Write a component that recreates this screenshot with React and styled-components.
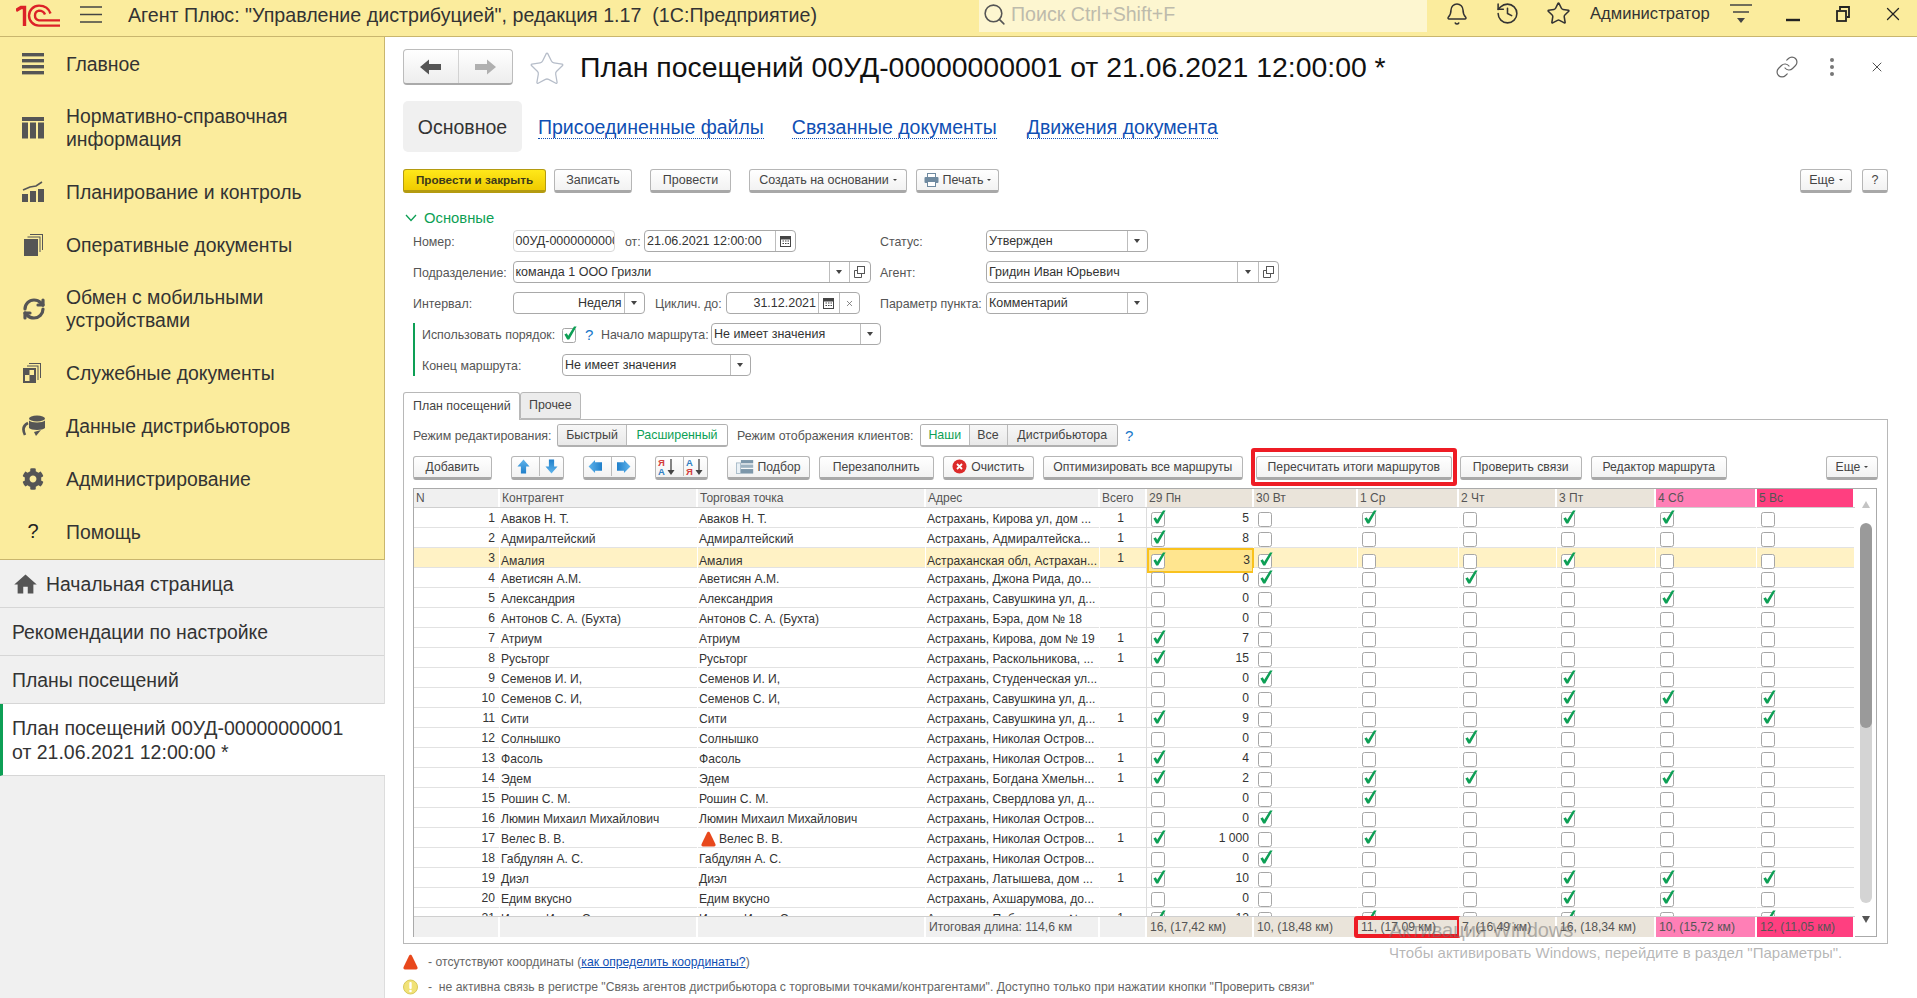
import React from 'react';
import styled, { createGlobalStyle } from 'styled-components';
import { Bell, History, Star, Search, X, Link as LinkIcon, RefreshCw } from 'lucide-react';
import { FaCog } from 'react-icons/fa';
import { MdHome } from 'react-icons/md';

const rows = [
    ['Аваков Н. Т.', 'Аваков Н. Т.', 'Астрахань, Кирова ул, дом ...', '1', '5', '1010110'],
    ['Адмиралтейский', 'Адмиралтейский', 'Астрахань, Адмиралтейска...', '1', '8', '1000000'],
    ['Амалия', 'Амалия', 'Астраханская обл, Астрахан...', '1', '3', '1100100'],
    ['Аветисян А.М.', 'Аветисян А.М.', 'Астрахань, Джона Рида, до...', '', '0', '0101000'],
    ['Александрия', 'Александрия', 'Астрахань, Савушкина ул, д...', '', '0', '0000011'],
    ['Антонов С. А. (Бухта)', 'Антонов С. А. (Бухта)', 'Астрахань, Бэра, дом № 18', '', '0', '0000000'],
    ['Атриум', 'Атриум', 'Астрахань, Кирова, дом № 19', '1', '7', '1000000'],
    ['Русьторг', 'Русьторг', 'Астрахань, Раскольникова, ...', '1', '15', '1000000'],
    ['Семенов И. И,', 'Семенов И. И,', 'Астрахань, Студенческая ул...', '', '0', '0100100'],
    ['Семенов С. И,', 'Семенов С. И,', 'Астрахань, Савушкина ул, д...', '', '0', '0000111'],
    ['Сити', 'Сити', 'Астрахань, Савушкина ул, д...', '1', '9', '1000101'],
    ['Солнышко', 'Солнышко', 'Астрахань, Николая Остров...', '', '0', '0011000'],
    ['Фасоль', 'Фасоль', 'Астрахань, Николая Остров...', '1', '4', '1000000'],
    ['Эдем', 'Эдем', 'Астрахань, Богдана Хмельн...', '1', '2', '1011010'],
    ['Рошин С. М.', 'Рошин С. М.', 'Астрахань, Свердлова ул, д...', '', '0', '0010000'],
    ['Люмин Михаил Михайлович', 'Люмин Михаил Михайлович', 'Астрахань, Николая Остров...', '', '0', '0100100'],
    ['Велес В. В.', 'Велес В. В.', 'Астрахань, Николая Остров...', '1', '1 000', '1010000'],
    ['Габдулян А. С.', 'Габдулян А. С.', 'Астрахань, Николая Остров...', '', '0', '0100000'],
    ['Диэл', 'Диэл', 'Астрахань, Латышева, дом ...', '1', '10', '1000111'],
    ['Едим вкусно', 'Едим вкусно', 'Астрахань, Ахшарумова, до...', '', '0', '0000110'],
    ['Иванов Игорь Сергеевич', 'Иванов Игорь Сергеевич', 'Астрахань, Победы, дом № ...', '1', '12', '1010101']
];

const days = [
    ['29 Пн', '16, (17,42 км)', 'work'],
    ['30 Вт', '10, (18,48 км)', 'work'],
    ['1 Ср', '11, (17,09 км)', 'work'],
    ['2 Чт', '7, (16,49 км)', 'work'],
    ['3 Пт', '16, (18,34 км)', 'work'],
    ['4 Сб', '10, (15,72 км)', 'sat'],
    ['5 Вс', '12, (11,05 км)', 'sun']
];

const Check = ({ on }) => (
    <CheckSvg width="16" height="17" viewBox="0 0 16 17">
        <rect x="0.5" y="2.5" width="13" height="14" rx="2" fill="#fff" stroke="#a6a6a6" />
        {on && <path d="M2.4 8.4 L4.8 7.2 L6.2 9.8 L12 0.6 L14.6 0.4 L7.2 13.6 L5.2 13.6 Z" fill="#0d9f55" />}
    </CheckSvg>
);

const Triangle = () => (
    <svg width="15" height="16" viewBox="0 0 15 16">
        <path d="M7.5 0.8 C8.3 0.8 8.8 1.4 9.2 2.2 L14.4 13 C15 14.4 14.2 15.4 13 15.4 H2 C0.8 15.4 0 14.4 0.6 13 L5.8 2.2 C6.2 1.4 6.7 0.8 7.5 0.8 Z" fill="#e8481c" />
    </svg>
);

const Logo = () => (
    <svg width="44" height="24" viewBox="0 0 44 24" fill="none" stroke="#dc2128" strokeWidth="2.4">
        <path d="M0 6.5 L5 3.5 H8.5 V22" strokeWidth="3.4" />
        <path d="M44 21.6 H23 A10 10 0 0 1 23 1.6 C29 1.6 33 5 34.5 9.5" />
        <path d="M44 16.4 H23 A5 5 0 0 1 23 6.6 C26 6.6 28 8 29 10.5" />
    </svg>
);

const Burger = () => (
    <svg width="22" height="18" viewBox="0 0 22 18" stroke="#444" strokeWidth="1.5">
        <path d="M0 1 H22 M0 8.5 H22 M0 16 H22" />
    </svg>
);

const MainIcon = () => (
    <svg width="22" height="22" viewBox="0 0 22 22" fill="#555">
        <rect y="0" width="22" height="3.4" /><rect y="6" width="22" height="3.4" />
        <rect y="12" width="22" height="3.4" /><rect y="18" width="22" height="3.4" />
    </svg>
);

const TableIcon = () => (
    <svg width="22" height="22" viewBox="0 0 22 22" fill="#555">
        <rect y="0" width="22" height="4" />
        <rect y="5.5" width="6" height="16" /><rect x="8" y="5.5" width="6" height="16" /><rect x="16" y="5.5" width="6" height="16" />
    </svg>
);

const ChartIcon = () => (
    <svg width="22" height="22" viewBox="0 0 22 22" fill="#555">
        <rect y="13" width="6" height="8" /><rect x="8" y="10" width="6" height="11" /><rect x="16" y="8" width="6" height="13" />
        <path d="M1 9 L8 6 L14 5 L20 1" fill="none" stroke="#555" strokeWidth="1.6" />
    </svg>
);

const DocsIcon = () => (
    <svg width="22" height="22" viewBox="0 0 22 22" fill="#555">
        <path d="M8 0 H21 V16 H20 V1 H8 Z" /><path d="M5.5 2.5 H18.5 V18 H17.5 V3.5 H5.5 Z" />
        <rect x="2" y="5" width="14" height="17" />
    </svg>
);

const ServiceIcon = () => (
    <svg width="20" height="20" viewBox="0 0 20 20" fill="#555">
        <path d="M7 0 H19 V15 H18 V1 H7 Z" /><path d="M5 2.5 H16.5 V17 H15.5 V3.5 H5 Z" />
        <rect x="1" y="5" width="13" height="15" />
        <rect x="7.5" y="7" width="4.5" height="5" fill="#fbec9d" /><rect x="3" y="12" width="4.5" height="6" fill="#fbec9d" />
    </svg>
);

const DataIcon = () => (
    <svg width="24" height="22" viewBox="0 0 24 22" fill="#555">
        <ellipse cx="15" cy="3.5" rx="8" ry="3" /><path d="M7 5.5 C9 8 21 8 23 5.5 V13 C21 15.5 9 15.5 7 13 Z" />
        <path d="M6 8 C2 10 0 14 3 20" fill="none" stroke="#555" strokeWidth="2.6" />
        <path d="M12 17 L19 15 L14 21 Z" />
    </svg>
);

const ArrowBack = ({ color, flip }) => (
    <svg width="22" height="16" viewBox="0 0 22 16" style={flip ? { transform: 'scaleX(-1)' } : undefined}>
        <path d="M0 8 L9 0.5 V5 H21 V11 H9 V15.5 Z" fill={color} />
    </svg>
);

const BlueArrow = ({ rotate, fat }) => (
    <svg width="13" height="15" viewBox="0 0 14 16" style={{ transform: `rotate(${rotate}deg)` }}>
        <defs>
            <linearGradient id="blueFill" x1="0" y1="0" x2="0" y2="1">
                <stop offset="0" stopColor="#5fb4ec" /><stop offset="1" stopColor="#1f7fca" />
            </linearGradient>
        </defs>
        <path d={fat ? 'M7 0.5 L14 7.5 L11.5 7.5 V15 H2.5 V7.5 L0 7.5 Z' : 'M7 0.5 L13.5 8 H9.8 V15.5 H4.2 V8 H0.5 Z'} fill="url(#blueFill)" />
    </svg>
);

const SortIcon = ({ top, bottom, topColor, bottomColor }) => (
    <svg width="20" height="20" viewBox="0 0 20 20">
        <text x="1" y="8.5" fontSize="9.5" fontWeight="700" fontFamily="Liberation Sans" fill={topColor}>{top}</text>
        <text x="1" y="18" fontSize="9.5" fontWeight="700" fontFamily="Liberation Sans" fill={bottomColor}>{bottom}</text>
        <path d="M14 2 V15" stroke="#444" strokeWidth="1.3" />
        <path d="M10.5 13 H17.5 L14 18 Z" fill="#444" />
    </svg>
);

const PickIcon = () => (
    <svg width="18" height="18" viewBox="0 0 22 18">
        <rect x="0.5" y="4" width="5" height="13" fill="#eaf1f6" stroke="#9fb4c2" />
        <rect x="6" y="0.5" width="15" height="4" fill="#7d97aa" /><rect x="6" y="6" width="15" height="4" fill="#9db2c1" /><rect x="6" y="11.5" width="15" height="5.5" fill="#7d97aa" />
    </svg>
);

const ClearIcon = () => (
    <svg width="15" height="15" viewBox="0 0 15 15">
        <circle cx="7.5" cy="7.5" r="7" fill="#dc2a2a" />
        <path d="M5 5 L10 10 M10 5 L5 10" stroke="#fff" strokeWidth="1.8" />
    </svg>
);

const PrintIcon = () => (
    <svg width="15" height="14" viewBox="0 0 15 14">
        <rect x="3.5" y="0.5" width="8" height="4" fill="#fff" stroke="#6f8aa0" />
        <rect x="0.5" y="4" width="14" height="6" rx="1" fill="#6f8aa0" />
        <rect x="3.5" y="8.5" width="8" height="5" fill="#fff" stroke="#6f8aa0" />
    </svg>
);

const CalendarIcon = () => (
    <svg width="11" height="12" viewBox="0 0 11 12">
        <rect x="0.5" y="1.5" width="10" height="10" fill="#fff" stroke="#444" />
        <rect x="0.5" y="1.5" width="10" height="3" fill="#444" />
        <path d="M2.5 6 H4 M5 6 H6.5 M7.5 6 H9 M2.5 8.5 H4 M5 8.5 H6.5 M7.5 8.5 H9" stroke="#444" />
    </svg>
);

const OpenIcon = () => (
    <svg width="11" height="12" viewBox="0 0 11 12" fill="none" stroke="#555">
        <rect x="3.5" y="0.5" width="7" height="7" fill="#fff" />
        <path d="M3 4.5 H0.5 V11.5 H7.5 V8" />
    </svg>
);

const Hint = () => (
    <svg width="15" height="16" viewBox="0 0 15 16">
        <circle cx="7.5" cy="8" r="7" fill="#f1e277" stroke="#d8c95a" />
        <rect x="6.3" y="3" width="2.4" height="7" rx="1" fill="#fff" />
        <circle cx="7.5" cy="12" r="1.3" fill="#fff" />
    </svg>
);

function renderNav() {

    const navItems = [
        [<MainIcon />, 'Главное'],
        [<TableIcon />, 'Нормативно-справочная\nинформация'],
        [<ChartIcon />, 'Планирование и контроль'],
        [<DocsIcon />, 'Оперативные документы'],
        [<RefreshCw size={24} strokeWidth={3.2} color="#555" />, 'Обмен с мобильными\nустройствами'],
        [<ServiceIcon />, 'Служебные документы'],
        [<DataIcon />, 'Данные дистрибьюторов'],
        [<FaCog size={22} color="#555" />, 'Администрирование'],
        [<HelpMark>?</HelpMark>, 'Помощь']
    ];

    return navItems.map(([icon, label]) => (
        <NavItem key={label} $tall={label.includes('\n')}>
            <NavIcon>{icon}</NavIcon>
            <NavLabel>{label}</NavLabel>
        </NavItem>
    ));
}

function renderRow(row, index) {

    const [name, point, address, total, count, marks] = row;
    const selected = index === 2;

    return (
        <Row key={index} $selected={selected}>
            <NumberCell>{index + 1}</NumberCell>
            <TextCell>{name}</TextCell>
            <TextCell>
                {index === 16 && <RowWarning><Triangle /></RowWarning>}
                {point}
            </TextCell>
            <TextCell>{address}</TextCell>
            <TotalCell>{total}</TotalCell>
            <FirstDayCell $selected={selected}>
                <Check on={marks[0] === '1'} />
                <span>{count}</span>
            </FirstDayCell>
            {marks.slice(1).split('').map((mark, day) => (
                <DayCell key={day}><Check on={mark === '1'} /></DayCell>
            ))}
        </Row>
    );
}

export default function App() {

    return (
        <Page>
            <GlobalStyle />

            <TopBar>
                <TopLeft>
                    <LogoBox><Logo /></LogoBox>
                    <BurgerBox><Burger /></BurgerBox>
                    <AppTitle>Агент Плюс: "Управление дистрибуцией", редакция 1.17  (1С:Предприятие)</AppTitle>
                </TopLeft>
                <SearchBox>
                    <Search size={25} strokeWidth={1.5} color="#555" />
                    <SearchText>Поиск Ctrl+Shift+F</SearchText>
                </SearchBox>
                <TopRight>
                    <BarIcon><Bell size={24} strokeWidth={1.5} color="#333" /></BarIcon>
                    <BarIcon><History size={25} strokeWidth={1.5} color="#333" /></BarIcon>
                    <BarIcon><Star size={25} strokeWidth={1.5} color="#333" /></BarIcon>
                    <UserName>Администратор</UserName>
                    <UserMenu>
                        <svg width="24" height="24" viewBox="0 0 24 24">
                            <path d="M1 3 H23 M4 10 H20" stroke="#444" strokeWidth="1.5" />
                            <path d="M8 16 H16 L12 21 Z" fill="#444" />
                        </svg>
                    </UserMenu>
                    <WindowButton $first>
                        <svg width="16" height="16" viewBox="0 0 16 16"><path d="M1 14 H15" stroke="#222" strokeWidth="2.4" /></svg>
                    </WindowButton>
                    <WindowButton>
                        <svg width="16" height="18" viewBox="0 0 16 18" fill="none" stroke="#222" strokeWidth="1.8">
                            <rect x="2" y="6" width="9" height="10" /><path d="M5 5 V2 H14 V12 H12" />
                        </svg>
                    </WindowButton>
                    <CloseWindow><X size={22} strokeWidth={1.4} color="#222" /></CloseWindow>
                </TopRight>
            </TopBar>

            <Body>
                <Sidebar>
                    <Nav>{renderNav()}</Nav>
                    <OpenItem><MdHome size={27} color="#555" /><span>Начальная страница</span></OpenItem>
                    <OpenItem>Рекомендации по настройке</OpenItem>
                    <OpenItem>Планы посещений</OpenItem>
                    <ActiveItem>План посещений 00УД-00000000001<br />от 21.06.2021 12:00:00 *</ActiveItem>
                </Sidebar>

                <Main>
                    <Header>
                        <NavGroup>
                            <NavArrow><ArrowBack color="#555" /></NavArrow>
                            <NavArrow><ArrowBack color="#b0b0b0" flip /></NavArrow>
                        </NavGroup>
                        <FavStar><Star size={38} strokeWidth={0.8} color="#b6bdc9" /></FavStar>
                        <Title>План посещений 00УД-00000000001 от 21.06.2021 12:00:00 *</Title>
                        <HeaderTools>
                            <LinkIcon size={24} strokeWidth={1.2} color="#666" />
                            <Dots><i /><i /><i /></Dots>
                            <X size={16} strokeWidth={1.4} color="#444" />
                        </HeaderTools>
                    </Header>

                    <PageTabs>
                        <PageTabActive>Основное</PageTabActive>
                        <PageLink $ml={16}>Присоединенные файлы</PageLink>
                        <PageLink $ml={28}>Связанные документы</PageLink>
                        <PageLink $ml={30}>Движения документа</PageLink>
                    </PageTabs>

                    <CommandBar>
                        <PrimaryButton $w={143}>Провести и закрыть</PrimaryButton>
                        <Button $w={78} $ml={8}>Записать</Button>
                        <Button $w={81} $ml={18}>Провести</Button>
                        <Button $w={158} $ml={18}>Создать на основании<Caret $small /></Button>
                        <Button $w={83} $ml={9}><PrintIcon />Печать<Caret $small /></Button>
                        <Button $w={52} $push>Еще<Caret $small /></Button>
                        <Button $w={26} $ml={10}>?</Button>
                    </CommandBar>

                    <GroupTitle>
                        <svg width="12" height="8" viewBox="0 0 12 8" fill="none" stroke="#0d9f55" strokeWidth="1.3"><path d="M1 1 L6 6.5 L11 1" /></svg>
                        Основные
                    </GroupTitle>

                    <Form>
                        <FormRow>
                            <Label $w={99.5}>Номер:</Label>
                            <Field $w={102} $plain><Value>00УД-00000000001</Value></Field>
                            <Label $w={19} $ml={10.5}>от:</Label>
                            <Field $w={152}><Value>21.06.2021 12:00:00</Value><Addon><CalendarIcon /></Addon></Field>
                            <Label $w={106} $ml={84}>Статус:</Label>
                            <Field $w={162}><Value>Утвержден</Value><Addon><Caret /></Addon></Field>
                        </FormRow>
                        <FormRow>
                            <Label $w={99.5}>Подразделение:</Label>
                            <Field $w={358}><Value>команда 1 ООО Гризли</Value><Addon><Caret /></Addon><Addon><OpenIcon /></Addon></Field>
                            <Label $w={106} $ml={9.5}>Агент:</Label>
                            <Field $w={293}><Value>Гридин Иван Юрьевич</Value><Addon><Caret /></Addon><Addon><OpenIcon /></Addon></Field>
                        </FormRow>
                        <FormRow>
                            <Label $w={99.5}>Интервал:</Label>
                            <Field $w={132.5}><Value $right>Неделя</Value><Addon><Caret /></Addon></Field>
                            <Label $w={71} $ml={10}>Циклич. до:</Label>
                            <Field $w={134}><Value $right>31.12.2021</Value><Addon><CalendarIcon /></Addon><Addon><X size={9} color="#666" /></Addon></Field>
                            <Label $w={106} $ml={20}>Параметр пункта:</Label>
                            <Field $w={162}><Value>Комментарий</Value><Addon><Caret /></Addon></Field>
                        </FormRow>
                        <OrderGroup>
                            <FormRow>
                                <Label $w={140}>Использовать порядок:</Label>
                                <OrderCheck><Check on /></OrderCheck>
                                <Question $w={16}>?</Question>
                                <Label $w={110}>Начало маршрута:</Label>
                                <Field $w={170}><Value>Не имеет значения</Value><Addon><Caret /></Addon></Field>
                            </FormRow>
                            <FormRow>
                                <Label $w={140}>Конец маршрута:</Label>
                                <Field $w={189}><Value>Не имеет значения</Value><Addon><Caret /></Addon></Field>
                            </FormRow>
                        </OrderGroup>
                    </Form>

                    <TabStrip>
                        <PanelTab $active $w={117}>План посещений</PanelTab>
                        <PanelTab $w={61}>Прочее</PanelTab>
                    </TabStrip>

                    <Panel>
                        <ModeRow>
                            <Label $w={144}>Режим редактирования:</Label>
                            <Segments>
                                <Segment $w={68}>Быстрый</Segment>
                                <Segment $w={101} $on>Расширенный</Segment>
                            </Segments>
                            <Label $w={183} $ml={9}>Режим отображения клиентов:</Label>
                            <Segments>
                                <Segment $w={47.5} $on>Наши</Segment>
                                <Segment $w={38}>Все</Segment>
                                <Segment $w={110.5}>Дистрибьютора</Segment>
                            </Segments>
                            <Question $w={16} $ml={7}>?</Question>
                        </ModeRow>

                        <RowTools>
                            <Button $w={79}>Добавить</Button>
                            <Button $w={53.5} $ml={18.5}>
                                <SplitPart><BlueArrow rotate={0} /></SplitPart>
                                <SplitPart><BlueArrow rotate={180} /></SplitPart>
                            </Button>
                            <Button $w={53.5} $ml={18.5}>
                                <SplitPart><BlueArrow rotate={-90} fat /></SplitPart>
                                <SplitPart><BlueArrow rotate={90} fat /></SplitPart>
                            </Button>
                            <Button $w={53} $ml={18.5}>
                                <SplitPart><SortIcon top="Я" bottom="А" topColor="#d43c3c" bottomColor="#2f7fc4" /></SplitPart>
                                <SplitPart><SortIcon top="А" bottom="Я" topColor="#2f7fc4" bottomColor="#d43c3c" /></SplitPart>
                            </Button>
                            <Button $w={83} $ml={19}><PickIcon />Подбор</Button>
                            <Button $w={114.5} $ml={9.5}>Перезаполнить</Button>
                            <Button $w={90.5} $ml={9.5}><ClearIcon />Очистить</Button>
                            <Button $w={199.5} $ml={9.5}>Оптимизировать все маршруты</Button>
                            <MarkedFrame>
                                <Button $w={196.5}>Пересчитать итоги маршрутов</Button>
                            </MarkedFrame>
                            <Button $w={121.5} $ml={9}>Проверить связи</Button>
                            <Button $w={136.5} $ml={9}>Редактор маршрута</Button>
                            <Button $w={52} $push>Еще<Caret $small /></Button>
                        </RowTools>

                        <Table>
                            <TableMain>
                                <HeadRow>
                                    <HeadCell>N</HeadCell>
                                    <HeadCell>Контрагент</HeadCell>
                                    <HeadCell>Торговая точка</HeadCell>
                                    <HeadCell>Адрес</HeadCell>
                                    <HeadCell>Всего</HeadCell>
                                    {days.map(([label, , kind]) => <HeadCell key={label} $kind={kind}>{label}</HeadCell>)}
                                </HeadRow>
                                <TableBody>
                                    {rows.map(renderRow)}
                                </TableBody>
                                <FootRow>
                                    <FootCell />
                                    <FootCell />
                                    <FootCell />
                                    <FootCell>Итоговая длина: 114,6 км</FootCell>
                                    <FootCell />
                                    {days.map(([label, sum, kind]) => (
                                        <FootCell key={label} $kind={kind} $marked={label === '1 Ср'}>{sum}</FootCell>
                                    ))}
                                </FootRow>
                            </TableMain>
                            <ScrollBar>
                                <ScrollArrow $up />
                                <ScrollTrack><ScrollThumb /></ScrollTrack>
                                <ScrollArrow />
                            </ScrollBar>
                        </Table>
                    </Panel>

                    <Legend $first>
                        <LegendIcon><Triangle /></LegendIcon>
                        <span>- отсутствуют координаты (<LegendLink>как определить координаты?</LegendLink>)</span>
                    </Legend>
                    <Legend>
                        <LegendIcon><Hint /></LegendIcon>
                        <span>-  не активна связь в регистре "Связь агентов дистрибьютора с торговыми точками/контрагентами". Доступно только при нажатии кнопки "Проверить связи"</span>
                    </Legend>
                </Main>
            </Body>

            <Watermark>
                <WatermarkTitle>Активация Windows</WatermarkTitle>
                <WatermarkText>Чтобы активировать Windows, перейдите в раздел "Параметры".</WatermarkText>
            </Watermark>
        </Page>
    );
}

const GlobalStyle = createGlobalStyle`
    html, body {
        margin: 0;
        padding: 0;
        background: #fff;
        font-family: "Liberation Sans", Arial, sans-serif;
        overflow: hidden;
    }
    * {
        box-sizing: border-box;
    }
`;

const Page = styled.div`
    position: relative;
    width: 1917px;
    height: 998px;
    display: flex;
    flex-direction: column;
    overflow: hidden;
    color: #333;
`;

const TopBar = styled.header`
    display: grid;
    grid-template-columns: 979px 448px 1fr;
    height: 37px;
    flex: none;
    background: #fbec9d;
    border-bottom: 1px solid #c9b66e;
`;

const TopLeft = styled.div`
    display: flex;
    align-items: center;
    height: 30px;
`;

const LogoBox = styled.div`
    margin-left: 16px;
    display: flex;
    margin-top: 2px;
`;

const BurgerBox = styled.div`
    margin-left: 20px;
    display: flex;
`;

const AppTitle = styled.div`
    margin-left: 26px;
    font-size: 19.65px;
    color: #333;
    white-space: pre;
`;

const SearchBox = styled.div`
    height: 32px;
    padding: 0 0 3px 3px;
    background: #fdf6d0;
    display: flex;
    align-items: center;
`;

const SearchText = styled.span`
    margin-left: 4px;
    font-size: 19.6px;
    color: #bdbbac;
`;

const TopRight = styled.div`
    display: flex;
    align-items: center;
    height: 27px;
    padding-left: 4px;
`;

const BarIcon = styled.div`
    width: 51px;
    display: flex;
    justify-content: center;
`;

const UserName = styled.div`
    width: 120px;
    margin-left: 6px;
    font-size: 16.6px;
    white-space: nowrap;
`;

const UserMenu = styled.div`
    width: 36px;
    margin-left: 13px;
    display: flex;
    justify-content: center;
`;

const WindowButton = styled.div`
    width: 50px;
    display: flex;
    justify-content: center;
    margin-left: ${props => (props.$first ? 9 : 0)}px;
`;

const CloseWindow = styled.div`
    width: 49px;
    display: flex;
    justify-content: center;
`;

const Body = styled.div`
    flex: 1;
    display: flex;
    min-height: 0;
`;

const Sidebar = styled.aside`
    width: 385px;
    flex: none;
    background: #f0f0f0;
    border-right: 1px solid #ddd;
`;

const Nav = styled.nav`
    background: #fbec9d;
    height: 523px;
    border-bottom: 1px solid #c9b66e;
    margin-right: -1px;
    border-right: 1px solid #c9b66e;
`;

const NavItem = styled.div`
    height: ${props => (props.$tall ? 75 : 53)}px;
    display: flex;
    align-items: center;
    padding-left: 22px;
`;

const NavIcon = styled.div`
    width: 44px;
    display: flex;
    align-items: center;
`;

const HelpMark = styled.span`
    width: 22px;
    text-align: center;
    font-size: 20px;
    color: #222;
`;

const NavLabel = styled.div`
    margin-top: 1px;
    font-size: 19.4px;
    line-height: 23px;
    color: #333;
    white-space: pre-line;
`;

const OpenItem = styled.div`
    height: 48px;
    display: flex;
    align-items: center;
    gap: 7px;
    padding: 1px 0 0 12px;
    font-size: 19.4px;
    color: #333;
    border-bottom: 1px solid #d6d6d6;
`;

const ActiveItem = styled.div`
    height: 72px;
    margin-right: -1px;
    padding: 12px 0 0 9px;
    font-size: 19.5px;
    line-height: 24px;
    color: #333;
    background: #fff;
    border-left: 3px solid #0d9f55;
    border-bottom: 1px solid #d6d6d6;
`;

const Main = styled.main`
    flex: 1;
    min-width: 0;
    padding: 12px 29px 0 18px;
    background: #fff;
`;

const Header = styled.div`
    display: flex;
    align-items: center;
    height: 36px;
`;

const NavGroup = styled.div`
    width: 110px;
    height: 36px;
    display: flex;
    border: 1px solid #bcbcbc;
    border-bottom: 2px solid #aaa;
    border-radius: 4px;
    background: linear-gradient(#fff, #ededed);
`;

const NavArrow = styled.div`
    flex: 1;
    display: flex;
    align-items: center;
    justify-content: center;
    & + & {
        border-left: 1px solid #d2d2d2;
    }
`;

const FavStar = styled.div`
    width: 38px;
    margin-left: 15px;
    display: flex;
    margin-top: 4px;
`;

const Title = styled.h1`
    margin: 0 0 0 14px;
    font-size: 28.4px;
    font-weight: 400;
    color: #111;
    white-space: nowrap;
`;

const HeaderTools = styled.div`
    margin-left: auto;
    display: flex;
    align-items: center;
    gap: 31px;
    padding-right: 3px;
`;

const Dots = styled.div`
    margin-right: 4px;
    display: flex;
    flex-direction: column;
    gap: 3px;
    & > i {
        display: block;
        width: 4px;
        height: 4px;
        border-radius: 50%;
        background: #777;
    }
`;

const PageTabs = styled.div`
    margin-top: 16px;
    height: 51px;
    display: flex;
    align-items: center;
`;

const PageTabActive = styled.div`
    width: 119px;
    height: 51px;
    padding-top: 1px;
    border-radius: 5px;
    background: #f0f0f0;
    display: flex;
    align-items: center;
    justify-content: center;
    font-size: 19.5px;
    color: #333;
`;

const PageLink = styled.a`
    margin: 2px 0 0 ${props => props.$ml}px;
    font-size: 19.5px;
    color: #0f4fb4;
    border-bottom: 1px dotted #0f4fb4;
    line-height: 22px;
`;

const CommandBar = styled.div`
    margin-top: 17px;
    height: 24px;
    display: flex;
    font-size: 12.5px;
`;

const Button = styled.div`
    flex: none;
    width: ${props => props.$w}px;
    height: 24px;
    margin-left: ${props => (props.$push ? 'auto' : `${props.$ml || 0}px`)};
    display: flex;
    align-items: center;
    justify-content: center;
    gap: 4px;
    padding-bottom: 1px;
    color: #444;
    white-space: nowrap;
    background: linear-gradient(#fff, #f2f2f2);
    border: 1px solid #b6b6b6;
    border-bottom: 3px solid #a8a8a8;
    border-radius: 3px;
`;

const PrimaryButton = styled(Button)`
    font-size: 11.7px;
    font-weight: 700;
    color: #3d3a1a;
    background: linear-gradient(#ffe81a, #efcb00);
    border: 1px solid #b49b10;
    border-bottom: 3px solid #b49b10;
`;

const MarkedFrame = styled.div`
    flex: none;
    height: 38px;
    margin: -8px -6px 0 8px;
    padding: 4px 1px 0 1px;
    border: 4px solid #ee1c25;
    border-radius: 3px;
`;

const SplitPart = styled.div`
    flex: 1;
    height: 100%;
    display: flex;
    align-items: center;
    justify-content: center;
    & + & {
        border-left: 1px solid #bbb;
    }
`;

const Caret = styled.i`
    display: block;
    width: 0;
    height: 0;
    border-left: ${props => (props.$small ? 2 : 3)}px solid transparent;
    border-right: ${props => (props.$small ? 2 : 3)}px solid transparent;
    border-top: ${props => (props.$small ? 2 : 4)}px solid #444;
`;

const GroupTitle = styled.div`
    margin: 15px 0 0 2px;
    padding-top: 1px;
    height: 18px;
    display: flex;
    align-items: center;
    gap: 7px;
    font-size: 14.8px;
    color: #0d9f55;
`;

const Form = styled.div`
    margin-top: 4px;
    padding-left: 10px;
    display: flex;
    flex-direction: column;
    gap: 9px;
`;

const FormRow = styled.div`
    display: flex;
    align-items: center;
    height: 22px;
`;

const Label = styled.div`
    flex: none;
    width: ${props => props.$w}px;
    margin-left: ${props => props.$ml || 0}px;
    padding-top: 1px;
    font-size: 12.4px;
    color: #555;
    white-space: nowrap;
`;

const Field = styled.div`
    flex: none;
    width: ${props => props.$w}px;
    height: 22px;
    display: flex;
    background: #fff;
    border: 1px solid ${props => (props.$plain ? '#d8d8d8' : '#a9a9a9')};
    border-radius: 4px;
    font-size: 12.5px;
    color: #333;
`;

const Value = styled.div`
    flex: 1;
    min-width: 0;
    padding: 0 2px;
    overflow: hidden;
    white-space: nowrap;
    line-height: 21px;
    text-align: ${props => (props.$right ? 'right' : 'left')};
`;

const Addon = styled.div`
    flex: none;
    width: 20.5px;
    display: flex;
    align-items: center;
    justify-content: center;
    border-left: 1px solid #bdbdbd;
`;

const OrderGroup = styled.div`
    padding-left: 7px;
    border-left: 2px solid #0d9f55;
    display: flex;
    flex-direction: column;
    gap: 9px;
`;

const OrderCheck = styled.div`
    width: 23px;
    display: flex;
`;

const Question = styled.div`
    flex: none;
    width: ${props => props.$w}px;
    margin-left: ${props => props.$ml || 0}px;
    font-size: 15px;
    color: #1677c9;
`;

const CheckSvg = styled.svg`
    flex: none;
    display: block;
`;

const TabStrip = styled.div`
    margin-top: 16px;
    height: 27px;
    display: flex;
`;

const PanelTab = styled.div`
    position: relative;
    width: ${props => props.$w}px;
    height: ${props => (props.$active ? 28 : 27)}px;
    display: flex;
    align-items: center;
    padding: 0 0 2px ${props => (props.$active ? 9 : 8)}px;
    font-size: 12.4px;
    color: #444;
    background: ${props => (props.$active ? '#fff' : '#ececec')};
    border: 1px solid #b8b8b8;
    border-bottom: ${props => (props.$active ? 'none' : '1px solid #b8b8b8')};
    border-radius: 3px 3px 0 0;
    z-index: 1;
`;

const Panel = styled.section`
    height: 525px;
    padding: 4px 9px 0;
    border: 1px solid #b8b8b8;
`;

const ModeRow = styled.div`
    height: 23px;
    display: flex;
    align-items: center;
`;

const Segments = styled.div`
    height: 23px;
    display: flex;
    flex: none;
    border: 1px solid #b0b0b0;
    border-bottom-width: 2px;
    border-radius: 3px;
    overflow: hidden;
`;

const Segment = styled.div`
    width: ${props => props.$w}px;
    display: flex;
    align-items: center;
    justify-content: center;
    font-size: 12.4px;
    color: ${props => (props.$on ? '#0d9f55' : '#444')};
    background: ${props => (props.$on ? '#fff' : 'linear-gradient(#f7f7f7, #e9e9e9)')};
    & + & {
        border-left: 1px solid #bbb;
    }
`;

const RowTools = styled.div`
    margin-top: 9px;
    height: 24px;
    display: flex;
    font-size: 12.2px;
`;

const Table = styled.div`
    margin-top: 8px;
    width: 1464px;
    height: 449px;
    display: flex;
    border: 1px solid #aaa;
`;

const TableMain = styled.div`
    width: 1441px;
    display: flex;
    flex-direction: column;
`;

const columns = '86px 198px 228px 174px 47px 107px 104px 101px 98px 99px 101px 98px';

const HeadRow = styled.div`
    height: 19px;
    flex: none;
    display: grid;
    grid-template-columns: ${columns};
    border-bottom: 1px solid #cfcfcf;
`;

const kindColor = {
    work: '#eae4da',
    sat: '#ff7fb6',
    sun: '#ff3f80'
};

const HeadCell = styled.div`
    padding-left: 2px;
    font-size: 12px;
    line-height: 18px;
    color: #555;
    white-space: nowrap;
    overflow: hidden;
    background: ${props => kindColor[props.$kind] || '#f0f0f0'};
    border-right: 2px solid #fff;
`;

const TableBody = styled.div`
    flex: 1;
    min-height: 0;
    overflow: hidden;
`;

const Row = styled.div`
    height: 20px;
    display: grid;
    grid-template-columns: ${columns};
    font-size: 12.1px;
    line-height: 21px;
    color: #333;
    background: ${props => (props.$selected ? '#fff2c5' : '#fff')};
    border-bottom: 1px solid #e2e2e2;
`;

const TextCell = styled.div`
    padding: 2px 0 0 1px;
    white-space: nowrap;
    overflow: hidden;
    border-right: 1px solid #fff;
    display: flex;
    align-items: center;
`;

const RowWarning = styled.span`
    display: flex;
    margin: -2px 3px 0 2px;
`;

const NumberCell = styled.div`
    padding-right: 4px;
    text-align: right;
    border-right: 1px solid #fff;
`;

const TotalCell = styled.div`
    padding-right: 5px;
    text-align: center;
    border-right: 1px solid #dcdcdc;
`;

const DayCell = styled.div`
    padding-left: 4px;
    display: flex;
    align-items: center;
    border-right: 1px solid #fff;
`;

const FirstDayCell = styled(DayCell)`
    justify-content: space-between;
    padding-right: 4px;
    ${props => props.$selected && 'background: #ffe58f; border: 2px solid #f9c21e; padding-left: 2px; padding-right: 2px;'}
`;

const FootRow = styled.div`
    height: 20px;
    flex: none;
    display: grid;
    grid-template-columns: ${columns};
    border-top: 1px solid #cfcfcf;
`;

const FootCell = styled.div`
    position: relative;
    padding-left: 3px;
    font-size: 12.2px;
    line-height: 20px;
    color: #555;
    white-space: nowrap;
    background: ${props => kindColor[props.$kind] || '#f0f0f0'};
    border-right: 2px solid #fff;
    ${props => props.$marked && `
        &::after {
            content: '';
            position: absolute;
            inset: -1px -4px -1px -4px;
            border: 4px solid #ee1c25;
            border-radius: 3px;
        }
    `}
`;

const ScrollBar = styled.div`
    flex: 1;
    display: flex;
    flex-direction: column;
    align-items: center;
`;

const ScrollArrow = styled.div`
    flex: none;
    margin: ${props => (props.$up ? '12px 0 15px' : '13px 0 0')};
    width: 0;
    height: 0;
    border-left: 4px solid transparent;
    border-right: 4px solid transparent;
    border-${props => (props.$up ? 'bottom' : 'top')}: 7px solid ${props => (props.$up ? '#c4c4c4' : '#555')};
`;

const ScrollTrack = styled.div`
    width: 12px;
    height: 380px;
    flex: none;
    border-radius: 6px;
    background: #d4d4d4;
    overflow: hidden;
`;

const ScrollThumb = styled.div`
    height: 205px;
    border-radius: 6px;
    background: #9a9a9a;
`;

const Legend = styled.div`
    height: 25px;
    display: flex;
    align-items: center;
    margin-top: ${props => (props.$first ? 5 : 0)}px;
    font-size: 12.2px;
    color: #666;
    white-space: pre;
`;

const LegendIcon = styled.div`
    width: 25px;
    display: flex;
`;

const LegendLink = styled.a`
    color: #0f4fb4;
    text-decoration: underline;
`;

const Watermark = styled.div`
    position: absolute;
    left: 1389px;
    top: 917px;
    z-index: 3;
    pointer-events: none;
    color: rgba(110, 110, 110, 0.5);
    white-space: nowrap;
`;

const WatermarkTitle = styled.div`
    font-size: 20px;
    line-height: 26px;
`;

const WatermarkText = styled.div`
    margin-top: 1px;
    font-size: 15px;
    line-height: 18px;
`;
